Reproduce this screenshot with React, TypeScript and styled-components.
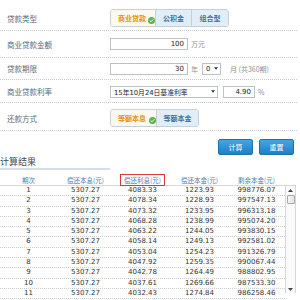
import styled, { createGlobalStyle } from "styled-components";

const GlobalStyle = createGlobalStyle`
  html, body {
    margin: 0;
    padding: 0;
    background: #fff;
  }
  body {
    font-family: "DejaVu Sans", "Noto Sans CJK SC", sans-serif;
  }
`;

const cjk = `"Noto Sans CJK SC", "DejaVu Sans", sans-serif`;
const num = `"DejaVu Sans", "Noto Sans CJK SC", sans-serif`;

const rows = [
  ["1", "5307.27", "4083.33", "1223.93", "998776.07"],
  ["2", "5307.27", "4078.34", "1228.93", "997547.13"],
  ["3", "5307.27", "4073.32", "1233.95", "996313.18"],
  ["4", "5307.27", "4068.28", "1238.99", "995074.20"],
  ["5", "5307.27", "4063.22", "1244.05", "993830.15"],
  ["6", "5307.27", "4058.14", "1249.13", "992581.02"],
  ["7", "5307.27", "4053.04", "1254.23", "991326.79"],
  ["8", "5307.27", "4047.92", "1259.35", "990067.44"],
  ["9", "5307.27", "4042.78", "1264.49", "988802.95"],
  ["10", "5307.27", "4037.61", "1269.66", "987533.30"],
  ["11", "5307.27", "4032.43", "1274.84", "986258.46"],
  ["12", "5307.27", "4027.23", "1280.04", "984978.42"],
];

const Check = () => (
  <Badge viewBox="0 0 8 8">
    <circle cx="4" cy="4" r="4" fill="#5bb450" />
    <path d="M2 4.1 L3.4 5.4 L6 2.7" stroke="#fff" strokeWidth="1.1" fill="none" />
  </Badge>
);

const Caret = () => (
  <CaretIcon viewBox="0 0 5 3">
    <path d="M0 0 H5 L2.5 3 Z" fill="#333" />
  </CaretIcon>
);

const LoanCalculator = () => {
  return (
    <Page>
      <GlobalStyle />
      <Row $h={31} $pt={6}>
        <Label>贷款类型</Label>
        <Tabs>
          <Tab $active $w={44}>
            商业贷款
            <Check />
          </Tab>
          <Tab $w={36}>公积金</Tab>
          <Tab $w={37}>组合型</Tab>
        </Tabs>
      </Row>
      <Row $h={27}>
        <Label>商业贷款金额</Label>
        <Input $w={78}>100</Input>
        <Unit>万元</Unit>
      </Row>
      <Row $h={22}>
        <Label>贷款期限</Label>
        <Input $w={78}>30</Input>
        <Unit>年</Unit>
        <Select $w={19}>
          <span>0</span>
          <Caret />
        </Select>
        <Unit $ml={9}>月 (共360期)</Unit>
      </Row>
      <Row $h={23} $pt={1}>
        <Label>商业贷款利率</Label>
        <Select $w={108}>
          <span>15年10月24日基准利率</span>
          <Caret />
        </Select>
        <Input $w={32} $ml={5}>4.90</Input>
        <Unit>%</Unit>
      </Row>
      <Row $h={28} $pt={3}>
        <Label>还款方式</Label>
        <Tabs>
          <Tab $active $w={45}>
            等额本息
            <Check />
          </Tab>
          <Tab $w={42}>等额本金</Tab>
        </Tabs>
      </Row>
      <ButtonBar>
        <Button>计算</Button>
        <Button>重置</Button>
      </ButtonBar>
      <Heading>计算结果</Heading>
      <HeaderRow>
        <HeadCell>期次</HeadCell>
        <HeadCell>偿还本息(元)</HeadCell>
        <HeadCell>
          <Marked>偿还利息(元)</Marked>
        </HeadCell>
        <HeadCell>偿还本金(元)</HeadCell>
        <HeadCell>剩余本金(元)</HeadCell>
      </HeaderRow>
      <Body>
        <Rows>
          {rows.map((r) => (
            <DataRow key={r[0]}>
              {r.map((v, i) => (
                <Cell key={i}>{v}</Cell>
              ))}
            </DataRow>
          ))}
        </Rows>
        <ScrollTrack>
          <Arrow>
            <svg viewBox="0 0 5 3" width="5" height="3">
              <path d="M0 3 H5 L2.5 0 Z" fill="#444" />
            </svg>
          </Arrow>
          <Thumb />
          <Spacer />
          <Arrow>
            <svg viewBox="0 0 5 3" width="5" height="3">
              <path d="M0 0 H5 L2.5 3 Z" fill="#444" />
            </svg>
          </Arrow>
        </ScrollTrack>
      </Body>
    </Page>
  );
};

export default LoanCalculator;

const Page = styled.div`
  width: 297px;
  height: 300px;
  overflow: hidden;
`;

const Row = styled.div<{ $h: number; $pt?: number }>`
  display: flex;
  align-items: center;
  box-sizing: border-box;
  height: ${(p) => p.$h}px;
  padding-top: ${(p) => p.$pt ?? 0}px;
  border-bottom: 1px dotted #c9c9c9;
`;

const Label = styled.div`
  width: 103px;
  padding-left: 7px;
  font-family: ${cjk};
  font-size: 7.5px;
  color: #566a7c;
`;

const Tabs = styled.div`
  display: flex;
  height: 18px;
  border: 1px solid #c5d0d8;
  border-radius: 3px;
  overflow: hidden;
  box-sizing: border-box;
`;

const Tab = styled.div<{ $active?: boolean; $w: number }>`
  position: relative;
  display: flex;
  align-items: center;
  justify-content: ${(p) => (p.$active ? "flex-start" : "center")};
  padding-left: ${(p) => (p.$active ? 7 : 0)}px;
  box-sizing: border-box;
  width: ${(p) => p.$w}px;
  font-family: ${cjk};
  font-size: 7px;
  font-weight: bold;
  color: ${(p) => (p.$active ? "#e8910f" : "#3f73a3")};
  background: ${(p) => (p.$active ? "#fbf8ef" : "#e2eef7")};
  & + & {
    border-left: 1px solid #c5d0d8;
  }
`;

const Badge = styled.svg`
  position: absolute;
  right: 0;
  top: 7px;
  width: 7px;
  height: 7px;
`;

const Input = styled.div<{ $w: number; $ml?: number }>`
  box-sizing: border-box;
  width: ${(p) => p.$w}px;
  height: 12px;
  margin-left: ${(p) => p.$ml ?? 0}px;
  border: 1px solid #b9c3cb;
  background: #fff;
  padding-right: 3px;
  text-align: right;
  font-family: ${num};
  font-size: 7px;
  line-height: 10px;
  color: #222;
`;

const Select = styled.div<{ $w: number }>`
  display: flex;
  align-items: center;
  justify-content: space-between;
  box-sizing: border-box;
  width: ${(p) => p.$w}px;
  height: 12px;
  border: 1px solid #b9c3cb;
  background: #fff;
  padding: 0 2px 0 3px;
  font-family: ${num};
  font-size: 6.8px;
  color: #222;
`;

const CaretIcon = styled.svg`
  width: 4px;
  height: 3px;
`;

const Unit = styled.span<{ $ml?: number }>`
  margin: 0 4px 0 ${(p) => p.$ml ?? 3}px;
  font-family: ${cjk};
  font-size: 7px;
  color: #8d9298;
`;

const ButtonBar = styled.div`
  display: flex;
  justify-content: flex-end;
  gap: 6px;
  padding: 8px 3px 0 0;
`;

const Button = styled.div`
  box-sizing: border-box;
  width: 35px;
  height: 16px;
  display: flex;
  align-items: center;
  justify-content: center;
  border: 1px solid #1d72ad;
  border-radius: 2px;
  background: linear-gradient(#43a6e2, #1f80c3);
  color: #fff;
  font-family: ${cjk};
  font-size: 7px;
`;

const Heading = styled.div`
  width: 110px;
  height: 12px;
  margin-top: 1px;
  border-bottom: 2px solid #d3dfe6;
  font-family: ${cjk};
  font-size: 9px;
  line-height: 11px;
  color: #3f4a55;
`;

const grid = `
  display: grid;
  grid-template-columns: repeat(5, 57px);
`;

const HeaderRow = styled.div`
  ${grid}
  box-sizing: border-box;
  width: 296px;
  height: 16px;
  padding-top: 4px;
  border-bottom: 1px solid #d8d8d8;
`;

const HeadCell = styled.div`
  display: flex;
  justify-content: center;
  align-items: center;
  font-family: ${cjk};
  font-size: 6.5px;
  color: #4a7fb0;
`;

const Marked = styled.span`
  padding: 1px 3px;
  line-height: 8px;
  border: 1.5px solid #d63a35;
`;

const Body = styled.div`
  display: flex;
  width: 296px;
`;

const Rows = styled.div`
  width: 285px;
`;

const DataRow = styled.div`
  ${grid}
  height: 10.3px;
  border-bottom: 1px dotted #cfcfcf;
  box-sizing: border-box;
`;

const Cell = styled.div`
  text-align: center;
  font-family: ${num};
  font-size: 7px;
  line-height: 9.5px;
  color: #333;
`;

const ScrollTrack = styled.div`
  display: flex;
  flex-direction: column;
  align-items: center;
  box-sizing: border-box;
  width: 11px;
  height: 107px;
  border-left: 1px solid #d6d6d6;
  border-right: 1px solid #d6d6d6;
  background: #fafafa;
`;

const Arrow = styled.div`
  height: 8px;
  display: flex;
  align-items: center;
  justify-content: center;
`;

const Thumb = styled.div`
  width: 8px;
  height: 9px;
  margin-top: 1px;
  box-sizing: border-box;
  border: 1px solid #a9a9a9;
  border-radius: 1px;
  background: linear-gradient(90deg, #f4f4f4, #e3e3e3);
`;

const Spacer = styled.div`
  flex: 1;
`;
